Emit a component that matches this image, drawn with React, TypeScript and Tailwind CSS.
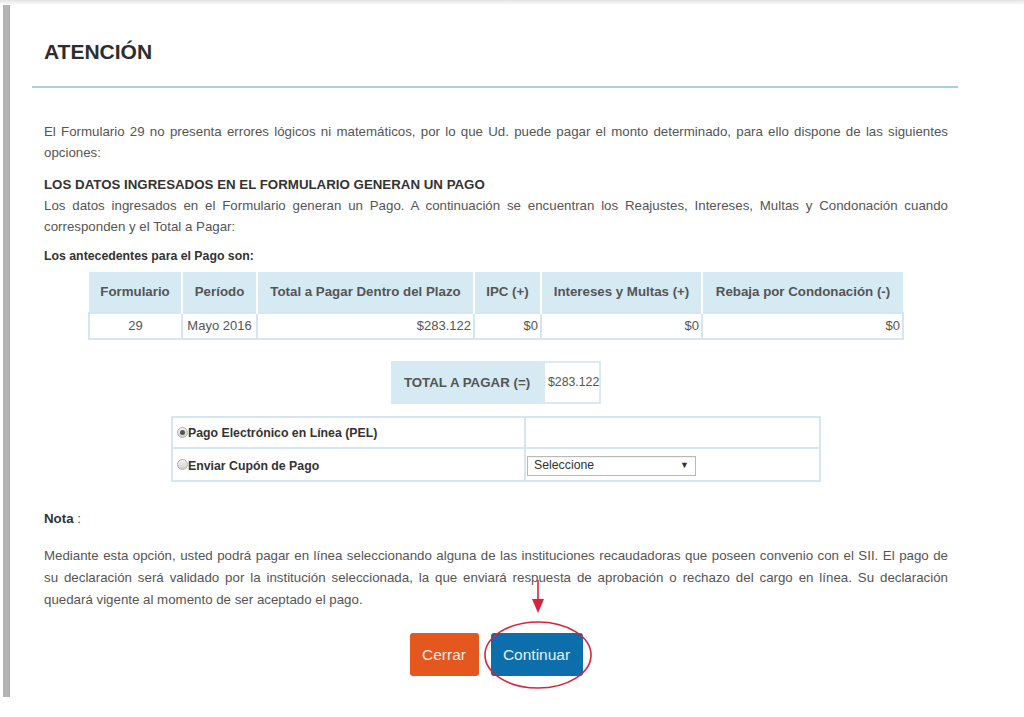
import React from 'react';

const headers = [
  { label: 'Formulario', w: 'w-[93px]' },
  { label: 'Período', w: 'w-[75px]' },
  { label: 'Total a Pagar Dentro del Plazo', w: 'w-[217px]' },
  { label: 'IPC (+)', w: 'w-[67px]' },
  { label: 'Intereses y Multas (+)', w: 'w-[161px]' },
  { label: 'Rebaja por Condonación (-)', w: 'w-[201px]' },
];

function Radio({ checked }: { checked?: boolean }) {
  return (
    <span className="inline-flex w-[11px] h-[11px] shrink-0 items-center justify-center rounded-full border border-[#b0b0b0] bg-linear-to-b from-[#f4f4f4] to-[#cfcfcf]">
      {checked && <span className="w-[5px] h-[5px] rounded-full bg-[#555]" />}
    </span>
  );
}

export default function App() {
  return (
    <div className="w-[1024px] h-[717px] overflow-hidden bg-white font-['Liberation_Sans',Arial,sans-serif] text-[#555]">
      <div className="h-[5px] bg-linear-to-b from-[#e2e2e2] to-white" />
      <div className="flex h-[692px]">
        <div className="ml-[3px] w-[7px] bg-[#b4b4b4] border-r border-[#8fb0c9]" />
        <div className="ml-[22px] w-[926px]">
          <h1 className="pt-[35px] pl-[12px] text-[21px] leading-[24px] font-bold text-[#2d2d2d]">ATENCIÓN</h1>
          <div className="mt-[22px] h-[2px] bg-[#a6d0df]" />

          <div className="pl-[12px] pr-[10px] text-[13.3px]">
            <p className="mt-[33px] leading-[21px] text-justify">
              El Formulario 29 no presenta errores lógicos ni matemáticos, por lo que Ud. puede pagar el monto determinado, para ello dispone de las siguientes opciones:
            </p>
            <p className="mt-[12px] leading-[20px] font-bold text-[#333]">LOS DATOS INGRESADOS EN EL FORMULARIO GENERAN UN PAGO</p>
            <p className="leading-[21px] text-justify">
              Los datos ingresados en el Formulario generan un Pago. A continuación se encuentran los Reajustes, Intereses, Multas y Condonación cuando corresponden y el Total a Pagar:
            </p>
            <p className="mt-[10px] text-[12.3px] leading-[18px] font-bold text-[#333]">Los antecedentes para el Pago son:</p>

            <table className="mt-[7px] mx-auto w-[814px] table-fixed">
              <thead>
                <tr className="h-[41px] bg-[#d5eaf3]">
                  {headers.map((h, i) => (
                    <th
                      key={h.label}
                      className={`${h.w} font-bold text-[13.3px] text-[#555] text-center ${i < headers.length - 1 ? 'border-r-2 border-white' : ''}`}
                    >
                      {h.label}
                    </th>
                  ))}
                </tr>
              </thead>
              <tbody>
                <tr className="h-[26px] text-[13px]">
                  <td className="border-2 border-[#d3e6f1] text-center">29</td>
                  <td className="border-2 border-[#d3e6f1] text-center">Mayo 2016</td>
                  <td className="border-2 border-[#d3e6f1] text-right pr-[2px]">$283.122</td>
                  <td className="border-2 border-[#d3e6f1] text-right pr-[2px]">$0</td>
                  <td className="border-2 border-[#d3e6f1] text-right pr-[2px]">$0</td>
                  <td className="border-2 border-[#d3e6f1] text-right pr-[2px]">$0</td>
                </tr>
              </tbody>
            </table>

            <div className="mt-[21px] flex justify-center">
              <div className="flex h-[43px]">
                <div className="w-[152px] flex items-center justify-center bg-[#d5eaf3] font-bold text-[13.3px]">TOTAL A PAGAR (=)</div>
                <div className="w-[58px] flex items-center pl-[3px] border-2 border-[#d9eaf4] text-[12.3px]">$283.122</div>
              </div>
            </div>

            <div className="mt-[12px] mx-auto w-[650px] border-2 border-[#d3e6f1] text-[12.3px] font-bold text-[#333]">
              <div className="flex h-[31px] border-b-2 border-[#d3e6f1]">
                <div className="w-[353px] flex items-center pl-[4px] border-r-2 border-[#d3e6f1]">
                  <Radio checked />
                  <span className="mt-[1px]">Pago Electrónico en Línea (PEL)</span>
                </div>
                <div className="flex-1" />
              </div>
              <div className="flex h-[31px]">
                <div className="w-[353px] flex items-center pl-[4px] border-r-2 border-[#d3e6f1]">
                  <Radio />
                  <span className="mt-[3px]">Enviar Cupón de Pago</span>
                </div>
                <div className="flex-1 flex items-center pl-[1px]">
                  <div className="w-[169px] h-[20px] mt-[2px] flex items-center justify-between pl-[6px] pr-[6px] border border-[#b9b9b9] bg-white font-normal text-[#333] shadow-[inset_0_1px_1px_rgba(0,0,0,0.06)]">
                    <span>Seleccione</span>
                    <span className="text-[9px]">▼</span>
                  </div>
                </div>
              </div>
            </div>

            <p className="mt-[28px] leading-[18px]">
              <span className="font-bold text-[#333]">Nota</span> :
            </p>
            <p className="mt-[17px] leading-[22px] text-justify">
              Mediante esta opción, usted podrá pagar en línea seleccionando alguna de las instituciones recaudadoras que poseen convenio con el SII. El pago de su declaración será validado por la institución seleccionada, la que enviará respuesta de aprobación o rechazo del cargo en línea. Su declaración quedará vigente al momento de ser aceptado el pago.
            </p>

            <div className="mt-[22px] flex justify-center gap-[12px]">
              <button className="w-[69px] h-[43px] rounded-[3px] bg-[#e4571f] text-[15.5px] text-[#f6eee9]">Cerrar</button>
              <span className="relative">
                <button className="w-[92px] h-[43px] rounded-[3px] bg-[#0c6eab] text-[15.5px] text-[#e6eef5]">Continuar</button>
                <svg className="absolute left-[-8px] top-[-56px] pointer-events-none" width="112" height="126" viewBox="0 0 112 126">
                  <line x1="55" y1="3" x2="55" y2="26" stroke="#d8243a" strokeWidth="1.6" />
                  <path d="M49 22 L61 22 L55 36 Z" fill="#d8243a" />
                  <ellipse cx="55" cy="78" rx="53" ry="33" fill="none" stroke="#d8243a" strokeWidth="1.6" />
                </svg>
              </span>
            </div>
          </div>
        </div>
      </div>
    </div>
  );
}
